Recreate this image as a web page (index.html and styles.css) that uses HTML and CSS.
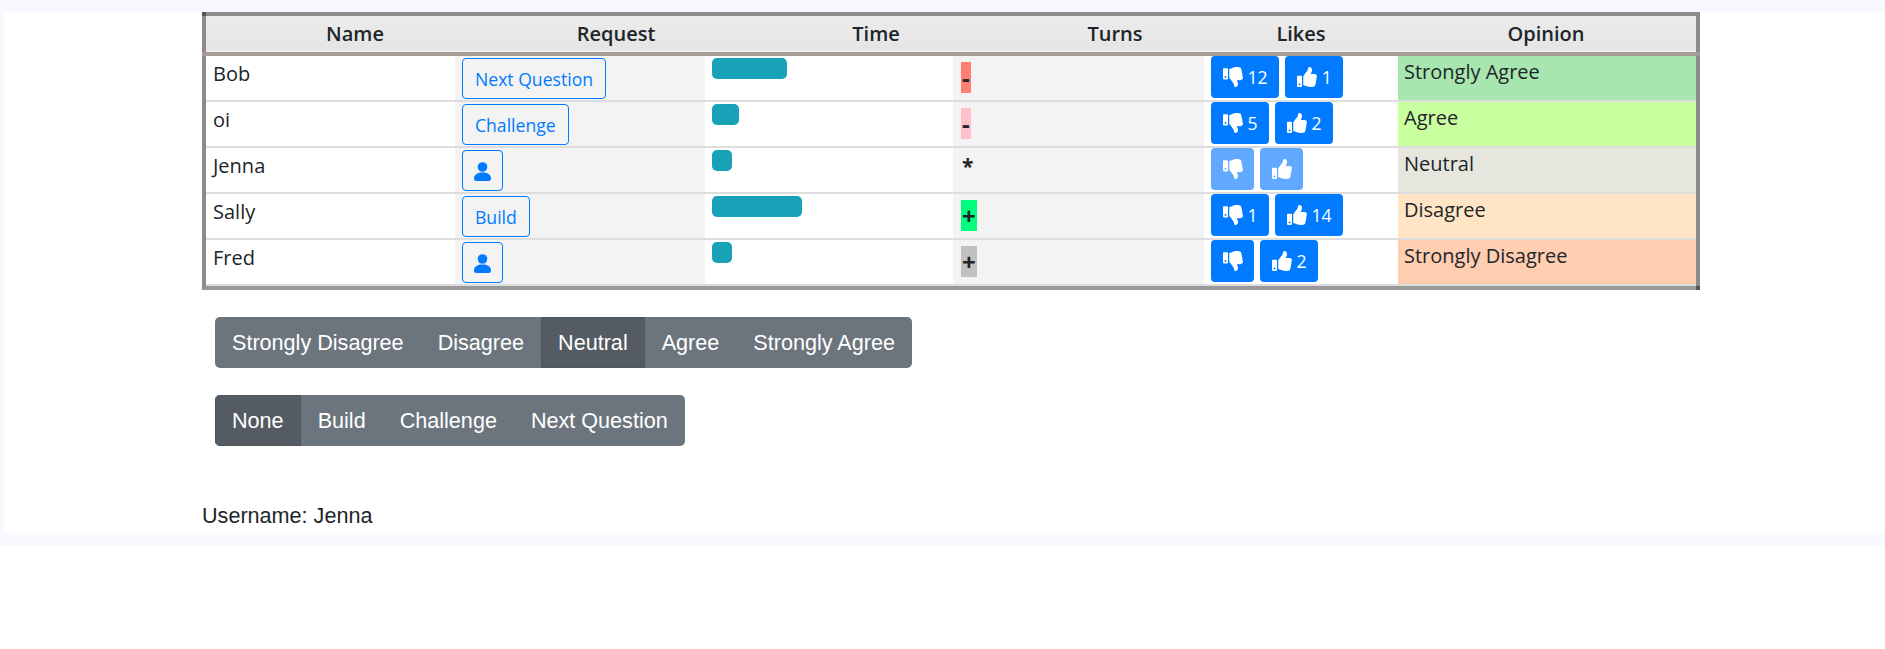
FILE: index.html
```html
<!DOCTYPE html>
<html lang="en">
<head>
    <meta charset="UTF-8">
    <meta name="viewport" content="width=device-width, initial-scale=1.0">
    <title>Team Board</title>
    <link rel="stylesheet" href="styles.css">
</head>
<body>
    <svg class="sprite" aria-hidden="true">
        <symbol id="thumb-up" viewBox="0 0 512 512"><path d="M104 224H24c-13.255 0-24 10.745-24 24v240c0 13.255 10.745 24 24 24h80c13.255 0 24-10.745 24-24V248c0-13.255-10.745-24-24-24zM64 472c-13.255 0-24-10.745-24-24s10.745-24 24-24 24 10.745 24 24-10.745 24-24 24zM384 81.452c0 42.416-25.97 66.208-33.277 94.548h101.723c33.397 0 59.397 27.746 59.553 58.098.084 17.938-7.546 37.249-19.439 49.197l-.11.11c9.836 23.337 8.237 56.037-9.308 79.469 8.681 25.895-.069 57.704-16.382 74.757 4.298 17.598 2.244 32.575-6.148 44.632C440.202 511.587 389.616 512 346.839 512l-2.845-.001c-48.287-.017-87.806-17.598-119.56-31.725-15.957-7.099-36.821-15.887-52.651-16.178-6.54-.12-11.783-5.457-11.783-11.998v-213.77c0-3.2 1.282-6.271 3.558-8.521 39.614-39.144 56.648-80.587 89.117-113.111 14.804-14.832 20.188-37.236 25.393-58.902C282.515 39.293 291.817 0 312 0c24 0 72 8 72 81.452z"/></symbol>
        <symbol id="thumb-down" viewBox="0 0 512 512"><path d="M0 56v240c0 13.255 10.745 24 24 24h80c13.255 0 24-10.745 24-24V56c0-13.255-10.745-24-24-24H24C10.745 32 0 42.745 0 56zm40 200c0-13.255 10.745-24 24-24s24 10.745 24 24-10.745 24-24 24-24-10.745-24-24zm272 256c-20.183 0-29.485-39.293-33.931-57.795-5.206-21.666-10.589-44.07-25.393-58.902-32.469-32.524-49.503-73.967-89.117-113.111a11.98 11.98 0 0 1-3.558-8.521V59.901c0-6.541 5.243-11.878 11.783-11.998 15.831-.29 36.694-9.079 52.651-16.178C256.189 17.598 295.709.017 343.995 0h2.844c42.777 0 93.363.413 113.774 29.737 8.392 12.057 10.446 27.034 6.148 44.632 16.312 17.053 25.063 48.863 16.382 74.757 17.544 23.432 19.143 56.132 9.308 79.469l.11.11c11.893 11.949 19.523 31.259 19.439 49.197-.156 30.352-26.157 58.098-59.553 58.098H350.723C358.03 364.34 384 388.132 384 430.548 384 504 336 512 312 512z"/></symbol>
        <symbol id="person" viewBox="0 0 17 19"><circle cx="8.5" cy="5" r="4.8"/><path d="M0 16.5C0 12.5 4 10.6 8.5 10.6S17 12.5 17 16.5Q17 19 14.5 19H2.5Q0 19 0 16.5z"/></symbol>
    </svg>

    <div class="page">
        <main class="content">
            <div class="board">
                <div class="head-row">
                    <div>Name</div>
                    <div>Request</div>
                    <div>Time</div>
                    <div>Turns</div>
                    <div>Likes</div>
                    <div>Opinion</div>
                </div>

                <div class="row">
                    <div class="cell name">Bob</div>
                    <div class="cell shade"><button class="request">Next Question</button></div>
                    <div class="cell"><div class="bar" style="width: 75px"></div></div>
                    <div class="cell shade turns"><span class="turn salmon">-</span></div>
                    <div class="cell likes">
                        <button class="vote"><svg><use href="#thumb-down"/></svg>12</button>
                        <button class="vote"><svg><use href="#thumb-up"/></svg>1</button>
                    </div>
                    <div class="cell opinion strongly-agree">Strongly Agree</div>
                </div>

                <div class="row">
                    <div class="cell name">oi</div>
                    <div class="cell shade"><button class="request">Challenge</button></div>
                    <div class="cell"><div class="bar" style="width: 27px"></div></div>
                    <div class="cell shade turns"><span class="turn pink">-</span></div>
                    <div class="cell likes">
                        <button class="vote"><svg><use href="#thumb-down"/></svg>5</button>
                        <button class="vote"><svg><use href="#thumb-up"/></svg>2</button>
                    </div>
                    <div class="cell opinion agree">Agree</div>
                </div>

                <div class="row">
                    <div class="cell name">Jenna</div>
                    <div class="cell shade"><button class="request icon-only"><svg><use href="#person"/></svg></button></div>
                    <div class="cell"><div class="bar" style="width: 20px"></div></div>
                    <div class="cell shade turns"><span class="turn star">*</span></div>
                    <div class="cell likes">
                        <button class="vote faded"><svg><use href="#thumb-down"/></svg></button>
                        <button class="vote faded"><svg><use href="#thumb-up"/></svg></button>
                    </div>
                    <div class="cell opinion neutral">Neutral</div>
                </div>

                <div class="row">
                    <div class="cell name">Sally</div>
                    <div class="cell shade"><button class="request">Build</button></div>
                    <div class="cell"><div class="bar" style="width: 90px"></div></div>
                    <div class="cell shade turns"><span class="turn green">+</span></div>
                    <div class="cell likes">
                        <button class="vote"><svg><use href="#thumb-down"/></svg>1</button>
                        <button class="vote"><svg><use href="#thumb-up"/></svg>14</button>
                    </div>
                    <div class="cell opinion disagree">Disagree</div>
                </div>

                <div class="row">
                    <div class="cell name">Fred</div>
                    <div class="cell shade"><button class="request icon-only"><svg><use href="#person"/></svg></button></div>
                    <div class="cell"><div class="bar" style="width: 20px"></div></div>
                    <div class="cell shade turns"><span class="turn silver">+</span></div>
                    <div class="cell likes">
                        <button class="vote"><svg><use href="#thumb-down"/></svg></button>
                        <button class="vote"><svg><use href="#thumb-up"/></svg>2</button>
                    </div>
                    <div class="cell opinion strongly-disagree">Strongly Disagree</div>
                </div>
            </div>

            <div class="btn-group">
                <button>Strongly Disagree</button>
                <button>Disagree</button>
                <button class="active">Neutral</button>
                <button>Agree</button>
                <button>Strongly Agree</button>
            </div>

            <div class="btn-group">
                <button class="active">None</button>
                <button>Build</button>
                <button>Challenge</button>
                <button>Next Question</button>
            </div>

            <p class="username">Username: Jenna</p>
        </main>
    </div>
</body>
</html>
```

FILE: styles.css
```css
body {
    margin: 0;
    padding: 0;
    background-color: #fff;
    color: #212529;
    font-family: "Liberation Sans", Arial, sans-serif;
    font-size: 21.6px;
}
button {
    font-family: inherit;
    cursor: pointer;
}
.sprite {
    display: none;
}
.page {
    background-color: #f8f9ff;
    padding: 12px 0 13px 4px;
}
.content {
    background-color: #fff;
    height: 521px;
    padding-left: 198px;
    box-sizing: border-box;
}

/* table */
.board {
    position: relative;
    width: 1498px;
    box-sizing: border-box;
    border: 4px solid #8c8c8c;
    border-bottom-color: #999;
    font-family: "Open Sans", "Noto Sans", sans-serif;
    font-size: 20px;
}
.board::before,
.board::after {
    content: "";
    position: absolute;
    width: 4px;
    height: 4px;
    background-color: #555;
}
.board::before {
    top: -4px;
    left: -4px;
}
.board::after {
    right: -4px;
    bottom: -4px;
}
.head-row {
    position: relative;
    display: grid;
    grid-template-columns: 298px 224px 296px 182px 190px 300px;
    height: 36px;
    margin-bottom: 4px;
    line-height: 35px;
    text-align: center;
    font-weight: 600;
    background: linear-gradient(#ececec, #e4e4e4);
    box-shadow: inset 0 -2px #eee;
}
/* brown rule runs over the side borders */
.head-row::after {
    content: "";
    position: absolute;
    top: 100%;
    left: -4px;
    right: -4px;
    height: 4px;
    background-color: #a89a96;
}
.row {
    display: grid;
    grid-template-columns: 249px 250px 248px 251px 194px 298px;
    grid-template-rows: 44px;
    height: 46px;
    box-sizing: border-box;
    border-bottom: 2px solid #ddd;
}
.cell {
    min-width: 0;
    padding: 2px 7px 0;
    background-color: #fff;
}
.shade {
    background-color: #f3f3f3;
}
.name {
    padding-top: 0;
    line-height: 36px;
}
.bar {
    height: 21px;
    background-color: #17a2b8;
    border-radius: 5px;
}

/* request buttons */
.request {
    vertical-align: top;
    height: 41px;
    padding: 0 12px;
    background-color: transparent;
    border: 1px solid #007bff;
    border-radius: 4px;
    color: #007bff;
    font-size: 17.6px;
}
.icon-only {
    width: 41px;
    padding: 0;
}
.icon-only svg {
    display: block;
    width: 17px;
    height: 19px;
    margin: 1px auto 0;
    fill: #007bff;
}

/* turns */
.turns {
    padding: 6px 8px 0;
    line-height: 31px;
    font-size: 24px;
    font-weight: 700;
}
.turn {
    display: inline-block;
    height: 31px;
    line-height: 31px;
    padding: 0 1px;
    vertical-align: top;
}
.star {
    font-size: 21px;
    line-height: 24px;
}
.salmon { background-color: #ff8072; }
.pink { background-color: #ffc0cb; }
.green { background-color: #00ff7f; }
.silver { background-color: #c0c0c0; }

/* likes */
.likes {
    display: flex;
    gap: 6px;
    padding: 0 7px;
}
.vote {
    display: flex;
    align-items: center;
    gap: 5px;
    height: 42px;
    padding: 0 11.5px;
    background-color: #007bff;
    border: none;
    border-radius: 4px;
    color: #fff;
    font-size: 17.6px;
}
.vote svg {
    width: 20px;
    height: 20px;
    fill: #fff;
}
.faded {
    background-color: #61a9ff;
}

/* opinion */
.opinion {
    padding: 0 6px;
    line-height: 32px;
}
.strongly-agree { background-color: #a8e6af; }
.agree { background-color: #c9ff9f; }
.neutral { background-color: #e6e6df; }
.disagree { background-color: #ffe5c5; }
.strongly-disagree { background-color: #ffcdb0; }

/* button groups */
.btn-group {
    display: flex;
    width: fit-content;
    margin: 27px 0 0 13px;
    border-radius: 5px;
    overflow: hidden;
}
.btn-group button {
    height: 51px;
    padding: 0 17px;
    background-color: #6c757d;
    border: none;
    color: #fff;
    font-size: 21.6px;
}
.btn-group .active {
    background-color: #545b62;
    box-shadow: inset 0 0 0 1px #4e555b;
}
.username {
    margin: 55px 0 0;
    line-height: 30px;
}
```
